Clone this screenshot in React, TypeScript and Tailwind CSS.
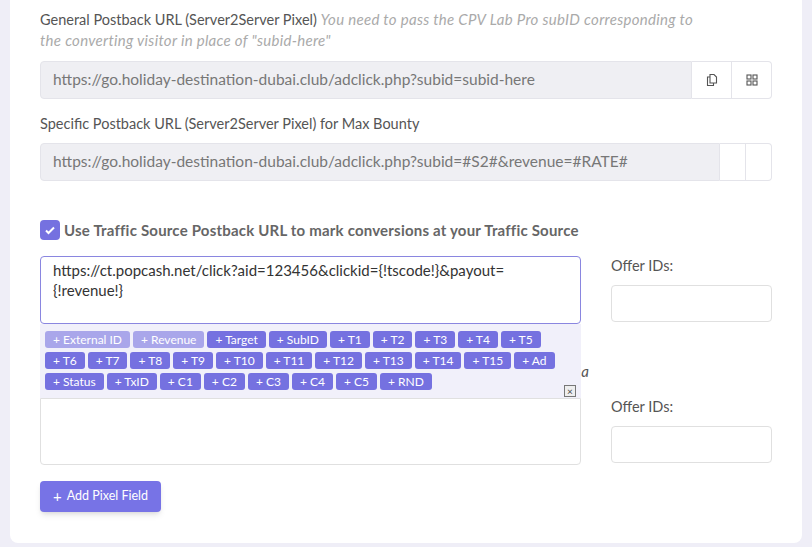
import React from 'react';

const tags = [
  ['External ID', true], ['Revenue', true], ['Target'], ['SubID'], ['T1'], ['T2'], ['T3'], ['T4'], ['T5'], ['T6'],
  ['T7'], ['T8'], ['T9'], ['T10'], ['T11'], ['T12'], ['T13'], ['T14'], ['T15'], ['Ad'], ['Status'],
  ['TxID'], ['C1'], ['C2'], ['C3'], ['C4'], ['C5'], ['RND'],
] as [string, boolean?][];

function CopyIcon() {
  return (
    <svg width="14" height="14" viewBox="0 0 14 14" fill="none" stroke="#555" strokeWidth="1.1">
      <path d="M5 1.5h4l2.5 2.5v6h-6.5z" />
      <path d="M5 4H2.5v8.5h6V10" />
    </svg>
  );
}

function GridIcon() {
  return (
    <svg width="12" height="12" viewBox="0 0 12 12" fill="none" stroke="#555" strokeWidth="1.1">
      <rect x="1" y="1" width="4" height="4" />
      <rect x="7" y="1" width="4" height="4" />
      <rect x="1" y="7" width="4" height="4" />
      <rect x="7" y="7" width="4" height="4" />
    </svg>
  );
}

export default function App() {
  return (
    <div className="h-[547px] bg-[#efeef7] px-[10px] pb-[4px] overflow-hidden" style={{ fontFamily: 'Lato, "Noto Sans", sans-serif' }}>
      <div className="h-full bg-white rounded-b-lg px-[30px] pt-[9px] text-[#555]">
        <p className="text-[14.5px] leading-[21px]">
          General Postback URL (Server2Server Pixel){' '}
          <i className="text-[#aaa] text-[15px] tracking-[0.3px]">You need to pass the CPV Lab Pro subID corresponding to<br />the converting visitor in place of "subid-here"</i>
        </p>
        <div className="flex mt-[10px] h-[38px]">
          <div className="flex-1 bg-[#efeff3] border border-[#e4e4ea] rounded-l flex items-center px-3 text-[15.5px] text-[#777]">
            https://go.holiday-destination-dubai.club/adclick.php?subid=subid-here
          </div>
          <div className="w-[40px] border border-[#e4e4ea] border-l-0 flex items-center justify-center"><CopyIcon /></div>
          <div className="w-[40px] border border-[#e4e4ea] border-l-0 rounded-r flex items-center justify-center"><GridIcon /></div>
        </div>
        <p className="text-[14.5px] mt-[14px] leading-[21px]">Specific Postback URL (Server2Server Pixel) for Max Bounty</p>
        <div className="flex mt-[9px] h-[38px]">
          <div className="flex-1 bg-[#efeff3] border border-[#e4e4ea] rounded-l flex items-center px-3 text-[15.5px] text-[#777]">
            https://go.holiday-destination-dubai.club/adclick.php?subid=#S2#&amp;revenue=#RATE#
          </div>
          <div className="w-[26px] border border-[#e4e4ea] border-l-0" />
          <div className="w-[26px] border border-[#e4e4ea] border-l-0 rounded-r" />
        </div>
        <label className="flex items-center gap-[4px] mt-[39px] h-[20px] text-[15px] font-bold text-[#666] tracking-[0.2px]">
          <span className="w-[20px] h-[20px] rounded bg-[#7571e0] flex items-center justify-center">
            <svg width="12" height="12" viewBox="0 0 12 12" fill="none" stroke="white" strokeWidth="2"><path d="M2 6.5l2.5 2.5L10 3.5" /></svg>
          </span>
          Use Traffic Source Postback URL to mark conversions at your Traffic Source
        </label>
        <div className="flex gap-[30px] mt-[16px]">
          <div className="w-[541px] relative">
            <div className="h-[68px] border border-[#8a86e0] rounded px-3 pt-[3px] text-[15px] leading-[20px] text-[#333]">
              https://ct.popcash.net/click?aid=123456&amp;clickid={'{!tscode!}'}&amp;payout=<br />{'{!revenue!}'}
            </div>
            <div className="bg-[#f1f0fa] px-[5px] pt-[7px] pb-[6px] relative h-[74px]">
              <div className="flex flex-wrap gap-x-[3px] gap-y-[4px] w-[530px]">
                {tags.map(([t, light]) => (
                  <span key={t} className={`h-[17px] px-[8px] rounded-[3px] text-white text-[12px] leading-[17px] ${light ? 'bg-[#a9a6ea]' : 'bg-[#7571e0]'}`}>+ {t}</span>
                ))}
              </div>
              <span className="absolute right-[5px] bottom-[1px] w-[12px] h-[12px] border border-[#777] bg-[#eee] text-[10px] leading-[10px] text-center text-[#444]">×</span>
              <i className="absolute right-[-8px] top-[36px] text-[15px] text-[#555]">a</i>
            </div>
            <div className="h-[67px] border border-[#e0e0e0] rounded-b" />
          </div>
          <div className="flex-1">
            <p className="text-[14.5px] leading-[20px]">Offer IDs:</p>
            <div className="h-[37px] border border-[#e0e0e0] rounded mt-[9px]" />
            <p className="text-[14.5px] leading-[20px] mt-[75px]">Offer IDs:</p>
            <div className="h-[37px] border border-[#e0e0e0] rounded mt-[9px]" />
          </div>
        </div>
        <button className="mt-[16px] h-[31px] px-[13px] bg-[#7773e6] text-white text-[12.5px] rounded shadow-md flex items-center gap-[5px]">
          <span className="text-[15px]">+</span> Add Pixel Field
        </button>
      </div>
    </div>
  );
}
